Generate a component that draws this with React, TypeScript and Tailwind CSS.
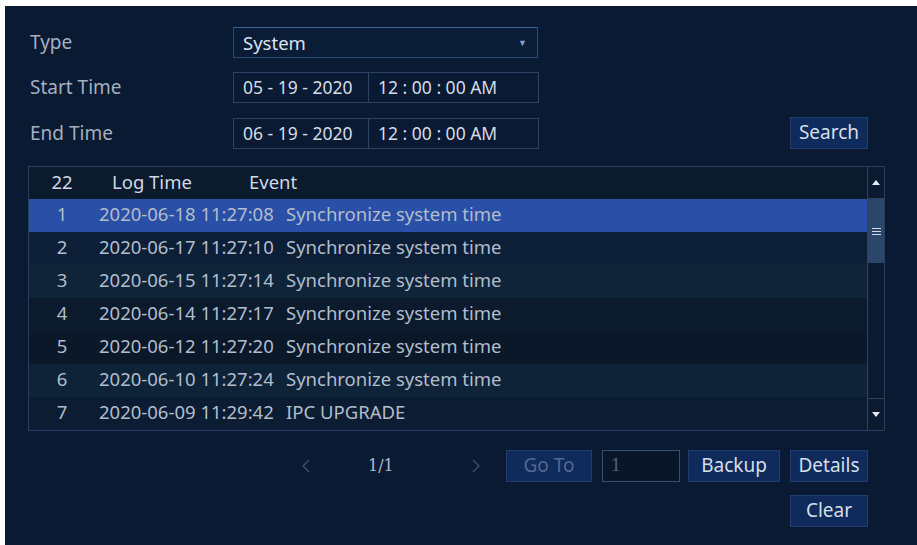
import React from 'react';

const rows = [
  { n: 1, time: '2020-06-18 11:27:08', event: 'Synchronize system time' },
  { n: 2, time: '2020-06-17 11:27:10', event: 'Synchronize system time' },
  { n: 3, time: '2020-06-15 11:27:14', event: 'Synchronize system time' },
  { n: 4, time: '2020-06-14 11:27:17', event: 'Synchronize system time' },
  { n: 5, time: '2020-06-12 11:27:20', event: 'Synchronize system time' },
  { n: 6, time: '2020-06-10 11:27:24', event: 'Synchronize system time' },
  { n: 7, time: '2020-06-09 11:29:42', event: 'IPC UPGRADE' },
];

const rowBg = ['bg-[#2a4fa6]', 'bg-[#0d1f36]', 'bg-[#0f2339]', 'bg-[#0b1a2d]', 'bg-[#0a1829]', 'bg-[#0e2238]', 'bg-[#0c1d33]'];

function Field({ label, children }: { label: string; children: React.ReactNode }) {
  return (
    <div className="flex h-[31px] items-center">
      <div className="w-[205px] pl-[2px] text-[19px] text-[#a4afbf]">{label}</div>
      {children}
    </div>
  );
}

function Btn({ children, dim, className = '' }: { children: React.ReactNode; dim?: boolean; className?: string }) {
  return (
    <div
      className={`flex h-[32px] items-center justify-center border border-[#1f3d6e] bg-[#0f2b5c] pb-[1px] text-[19px] ${
        dim ? 'text-[#4f6890]' : 'text-[#d5deea]'
      } ${className}`}
    >
      {children}
    </div>
  );
}

function TimeBox({ date }: { date: string }) {
  return (
    <div className="flex h-full border border-[#2b4466] text-[17.5px] text-[#d3dce8]">
      <div className="flex w-[135px] items-center border-r border-[#2b4466] pl-[9px]">{date}</div>
      <div className="flex w-[169px] items-center pl-[9px]">12 : 00 : 00 AM</div>
    </div>
  );
}

export default function App() {
  return (
    <div className="min-h-screen bg-white pl-[5px] pt-[6px]" style={{ fontFamily: '"Noto Sans", "Open Sans", sans-serif' }}>
      <div className="h-[539px] bg-[#0a1a32] pl-[23px] pr-[32px] pt-[21px]">
        <div className="flex flex-col gap-[14px]">
          <Field label="Type">
            <div className="flex h-full w-[305px] items-center justify-between border border-[#2b4a72] border-t-[#3d6294] bg-[#0b1c36] pl-[9px] pr-[10px] text-[18.5px] text-[#dbe3ee]">
              <span>System</span>
              <span className="text-[9px] text-[#7fa2d0]">▼</span>
            </div>
          </Field>
          <Field label="Start Time">
            <TimeBox date="05 - 19 - 2020" />
          </Field>
          <div className="flex items-center justify-between">
            <Field label="End Time">
              <TimeBox date="06 - 19 - 2020" />
            </Field>
            <Btn className="mr-[17px] w-[78px]">Search</Btn>
          </div>
        </div>

        <div className="mt-[17px] flex h-[265px] border border-[#253f60] bg-[#0b1a2d]">
          <div className="flex flex-1 flex-col">
            <div className="flex h-[32px] items-center pb-[3px] text-[18.5px] text-[#d0d9e5]">
              <div className="w-[66px] text-center">22</div>
              <div className="w-[150px] pl-[17px]">Log Time</div>
              <div className="pl-[4px]">Event</div>
            </div>
            {rows.map((r, i) => (
              <div key={r.n} className={`flex h-[33px] items-center pb-[3px] text-[18.5px] text-[#b2bdcc] ${rowBg[i]}`}>
                <div className="w-[66px] text-center">{r.n}</div>
                <div className="w-[186px] whitespace-nowrap pl-[4px]">{r.time}</div>
                <div className="whitespace-nowrap pl-[5px]">{r.event}</div>
              </div>
            ))}
          </div>
          <div className="flex w-[17px] flex-col border-l border-[#2b4466] bg-[#0b1a2e]">
            <div className="flex h-[32px] items-center justify-center border-b border-[#2b4466]">
              <svg width="8" height="5" viewBox="0 0 8 5"><path d="M0 5L4 0L8 5Z" fill="#e3eaf3" /></svg>
            </div>
            <div className="flex h-[64px] items-center justify-center bg-[#2a4669]">
              <svg width="9" height="7" viewBox="0 0 9 7"><path d="M0 0.5H9M0 3.5H9M0 6.5H9" stroke="#d0dae6" strokeWidth="1" /></svg>
            </div>
            <div className="flex-1" />
            <div className="flex h-[32px] items-center justify-center border-t border-[#2b4466]">
              <svg width="8" height="5" viewBox="0 0 8 5"><path d="M0 0L4 5L8 0Z" fill="#e3eaf3" /></svg>
            </div>
          </div>
        </div>

        <div className="mt-[19px] flex flex-col items-end gap-[13px] pr-[17px]">
          <div className="flex items-center">
            <svg width="8" height="14" viewBox="0 0 8 14"><path d="M7 1L1 7L7 13" fill="none" stroke="#3d5275" strokeWidth="1.3" /></svg>
            <span className="ml-[58px] w-[40px] text-[16px] text-[#aebbd0]" style={{ fontFamily: '"DejaVu Serif", serif' }}>1/1</span>
            <svg className="ml-[64px]" width="8" height="14" viewBox="0 0 8 14"><path d="M1 1L7 7L1 13" fill="none" stroke="#3d5275" strokeWidth="1.3" /></svg>
            <Btn dim className="ml-[26px] w-[86px]">Go To</Btn>
            <div className="ml-[10px] flex h-[32px] w-[78px] items-center border border-[#3a4f6d] bg-[#09162a] pl-[8px] text-[16px] text-[#4d6488]" style={{ fontFamily: '"DejaVu Serif", serif' }}>1</div>
            <Btn className="ml-[8px] w-[92px]">Backup</Btn>
            <Btn className="ml-[10px] w-[78px]">Details</Btn>
          </div>
          <Btn className="w-[78px]">Clear</Btn>
        </div>
      </div>
    </div>
  );
}
